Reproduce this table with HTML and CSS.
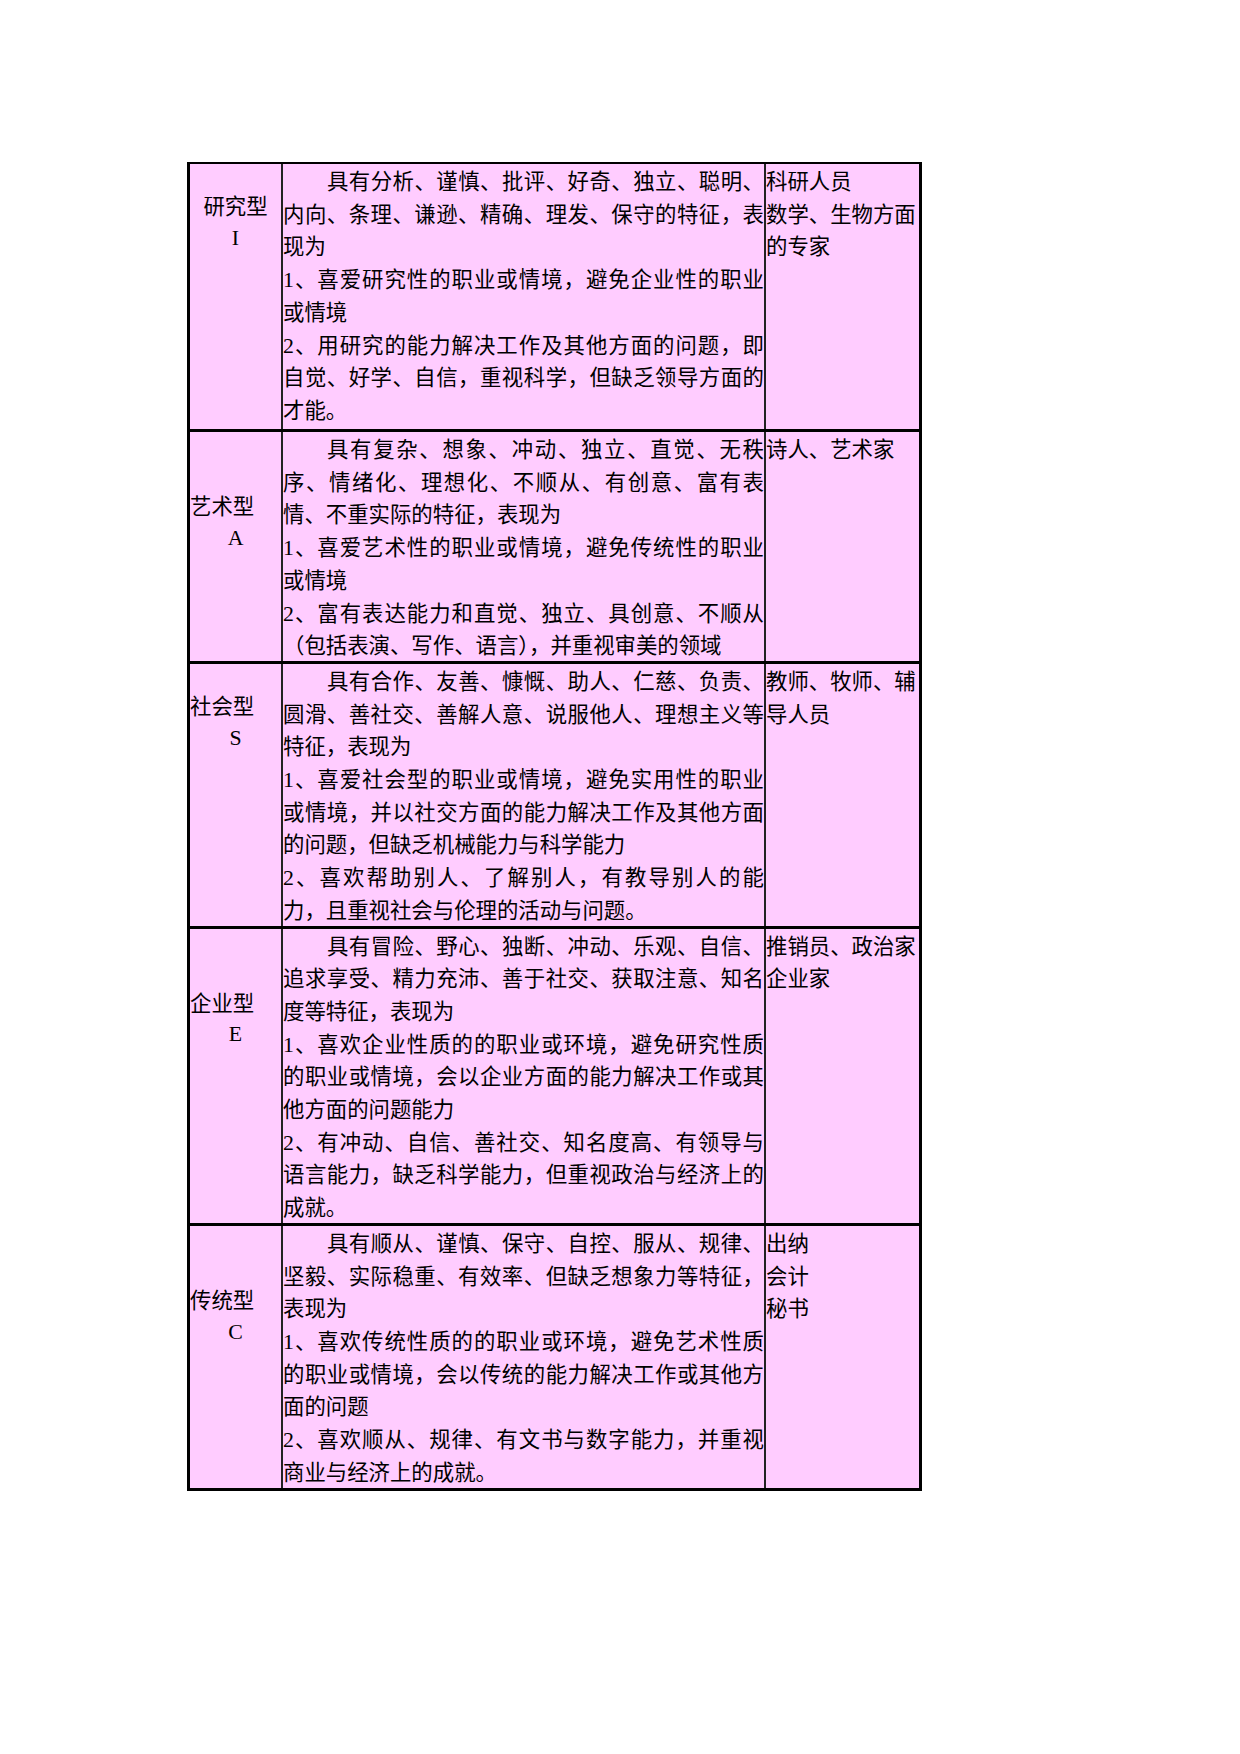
FILE: index.html
```html
<!DOCTYPE html>
<html lang="zh-CN">
<head>
<meta charset="utf-8">
<title>职业类型</title>
<link rel="stylesheet" href="styles.css">
</head>
<body>
<div class="page">
  <div class="sheet">
    <div class="row row-first">
      <div class="lab lab-high lab-centered">
        <span class="lab-name">研究型</span>
        <span class="lab-code">I</span>
      </div>
      <div class="desc">
        <span class="ln j indent">具有分析、谨慎、批评、好奇、独立、聪明、</span>
        <span class="ln j">内向、条理、谦逊、精确、理发、保守的特征，表</span>
        <span class="ln">现为</span>
        <span class="ln j"><span class="num">1</span>、喜爱研究性的职业或情境，避免企业性的职业</span>
        <span class="ln">或情境</span>
        <span class="ln j"><span class="num">2</span>、用研究的能力解决工作及其他方面的问题，即</span>
        <span class="ln j">自觉、好学、自信，重视科学，但缺乏领导方面的</span>
        <span class="ln">才能。</span>
      </div>
      <div class="jobs">
        <span class="ln">科研人员</span>
        <span class="ln">数学、生物方面</span>
        <span class="ln">的专家</span>
      </div>
    </div>

    <div class="row">
      <div class="lab lab-low">
        <span class="lab-name">艺术型</span>
        <span class="lab-code">A</span>
      </div>
      <div class="desc">
        <span class="ln j indent">具有复杂、想象、冲动、独立、直觉、无秩</span>
        <span class="ln j">序、情绪化、理想化、不顺从、有创意、富有表</span>
        <span class="ln">情、不重实际的特征，表现为</span>
        <span class="ln j"><span class="num">1</span>、喜爱艺术性的职业或情境，避免传统性的职业</span>
        <span class="ln">或情境</span>
        <span class="ln j"><span class="num">2</span>、富有表达能力和直觉、独立、具创意、不顺从</span>
        <span class="ln">（包括表演、写作、语言），并重视审美的领域</span>
      </div>
      <div class="jobs">
        <span class="ln">诗人、艺术家</span>
      </div>
    </div>

    <div class="row">
      <div class="lab lab-high">
        <span class="lab-name">社会型</span>
        <span class="lab-code">S</span>
      </div>
      <div class="desc">
        <span class="ln j indent">具有合作、友善、慷慨、助人、仁慈、负责、</span>
        <span class="ln j">圆滑、善社交、善解人意、说服他人、理想主义等</span>
        <span class="ln">特征，表现为</span>
        <span class="ln j"><span class="num">1</span>、喜爱社会型的职业或情境，避免实用性的职业</span>
        <span class="ln j">或情境，并以社交方面的能力解决工作及其他方面</span>
        <span class="ln">的问题，但缺乏机械能力与科学能力</span>
        <span class="ln j"><span class="num">2</span>、喜欢帮助别人、了解别人，有教导别人的能</span>
        <span class="ln">力，且重视社会与伦理的活动与问题。</span>
      </div>
      <div class="jobs">
        <span class="ln">教师、牧师、辅</span>
        <span class="ln">导人员</span>
      </div>
    </div>

    <div class="row">
      <div class="lab lab-low">
        <span class="lab-name">企业型</span>
        <span class="lab-code">E</span>
      </div>
      <div class="desc">
        <span class="ln j indent">具有冒险、野心、独断、冲动、乐观、自信、</span>
        <span class="ln j">追求享受、精力充沛、善于社交、获取注意、知名</span>
        <span class="ln">度等特征，表现为</span>
        <span class="ln j"><span class="num">1</span>、喜欢企业性质的的职业或环境，避免研究性质</span>
        <span class="ln j">的职业或情境，会以企业方面的能力解决工作或其</span>
        <span class="ln">他方面的问题能力</span>
        <span class="ln j"><span class="num">2</span>、有冲动、自信、善社交、知名度高、有领导与</span>
        <span class="ln j">语言能力，缺乏科学能力，但重视政治与经济上的</span>
        <span class="ln">成就。</span>
      </div>
      <div class="jobs">
        <span class="ln">推销员、政治家</span>
        <span class="ln">企业家</span>
      </div>
    </div>

    <div class="row">
      <div class="lab lab-low">
        <span class="lab-name">传统型</span>
        <span class="lab-code">C</span>
      </div>
      <div class="desc">
        <span class="ln j indent">具有顺从、谨慎、保守、自控、服从、规律、</span>
        <span class="ln j">坚毅、实际稳重、有效率、但缺乏想象力等特征，</span>
        <span class="ln">表现为</span>
        <span class="ln j"><span class="num">1</span>、喜欢传统性质的的职业或环境，避免艺术性质</span>
        <span class="ln j">的职业或情境，会以传统的能力解决工作或其他方</span>
        <span class="ln">面的问题</span>
        <span class="ln j"><span class="num">2</span>、喜欢顺从、规律、有文书与数字能力，并重视</span>
        <span class="ln">商业与经济上的成就。</span>
      </div>
      <div class="jobs">
        <span class="ln">出纳</span>
        <span class="ln">会计</span>
        <span class="ln">秘书</span>
      </div>
    </div>
  </div>
</div>
</body>
</html>
```

FILE: styles.css
```css
html, body {
  margin: 0;
  padding: 0;
  background: #ffffff;
}

body {
  font-family: "Noto Sans CJK SC", "Noto Sans", sans-serif;
  font-size: 21.4px;
  line-height: 32.7px;
  color: #000000;
}

.page {
  padding: 162px 0 0 187px;
}

.sheet {
  width: 729px;
  border: 3px solid #000000;
  border-top-width: 2px;
  background: #ffccff;
}

.row {
  display: grid;
  grid-template-columns: 93px 483px 149px;
}

.row-first {
  min-height: 265px;
}

.row + .row {
  border-top: 3px solid #000000;
}

.lab {
  border-right: 2px solid #222222;
}

.lab-high {
  padding-top: 25px;
}

.lab-low {
  padding-top: 57px;
}

.lab-name {
  display: block;
  text-align: left;
  white-space: nowrap;
}

.lab-centered .lab-name {
  text-align: center;
}

.lab-code {
  display: block;
  text-align: center;
  font-family: "Liberation Serif", "Times New Roman", serif;
  font-size: 21.8px;
}

.desc {
  border-right: 2px solid #222222;
}

.ln {
  display: block;
}

.j {
  text-align: justify;
  text-align-last: justify;
}

.indent {
  padding-left: 44px;
}

.num {
  font-family: "Liberation Serif", "Times New Roman", serif;
  font-size: 21.8px;
  line-height: 1;
}

.jobs .ln {
  white-space: nowrap;
}
```
